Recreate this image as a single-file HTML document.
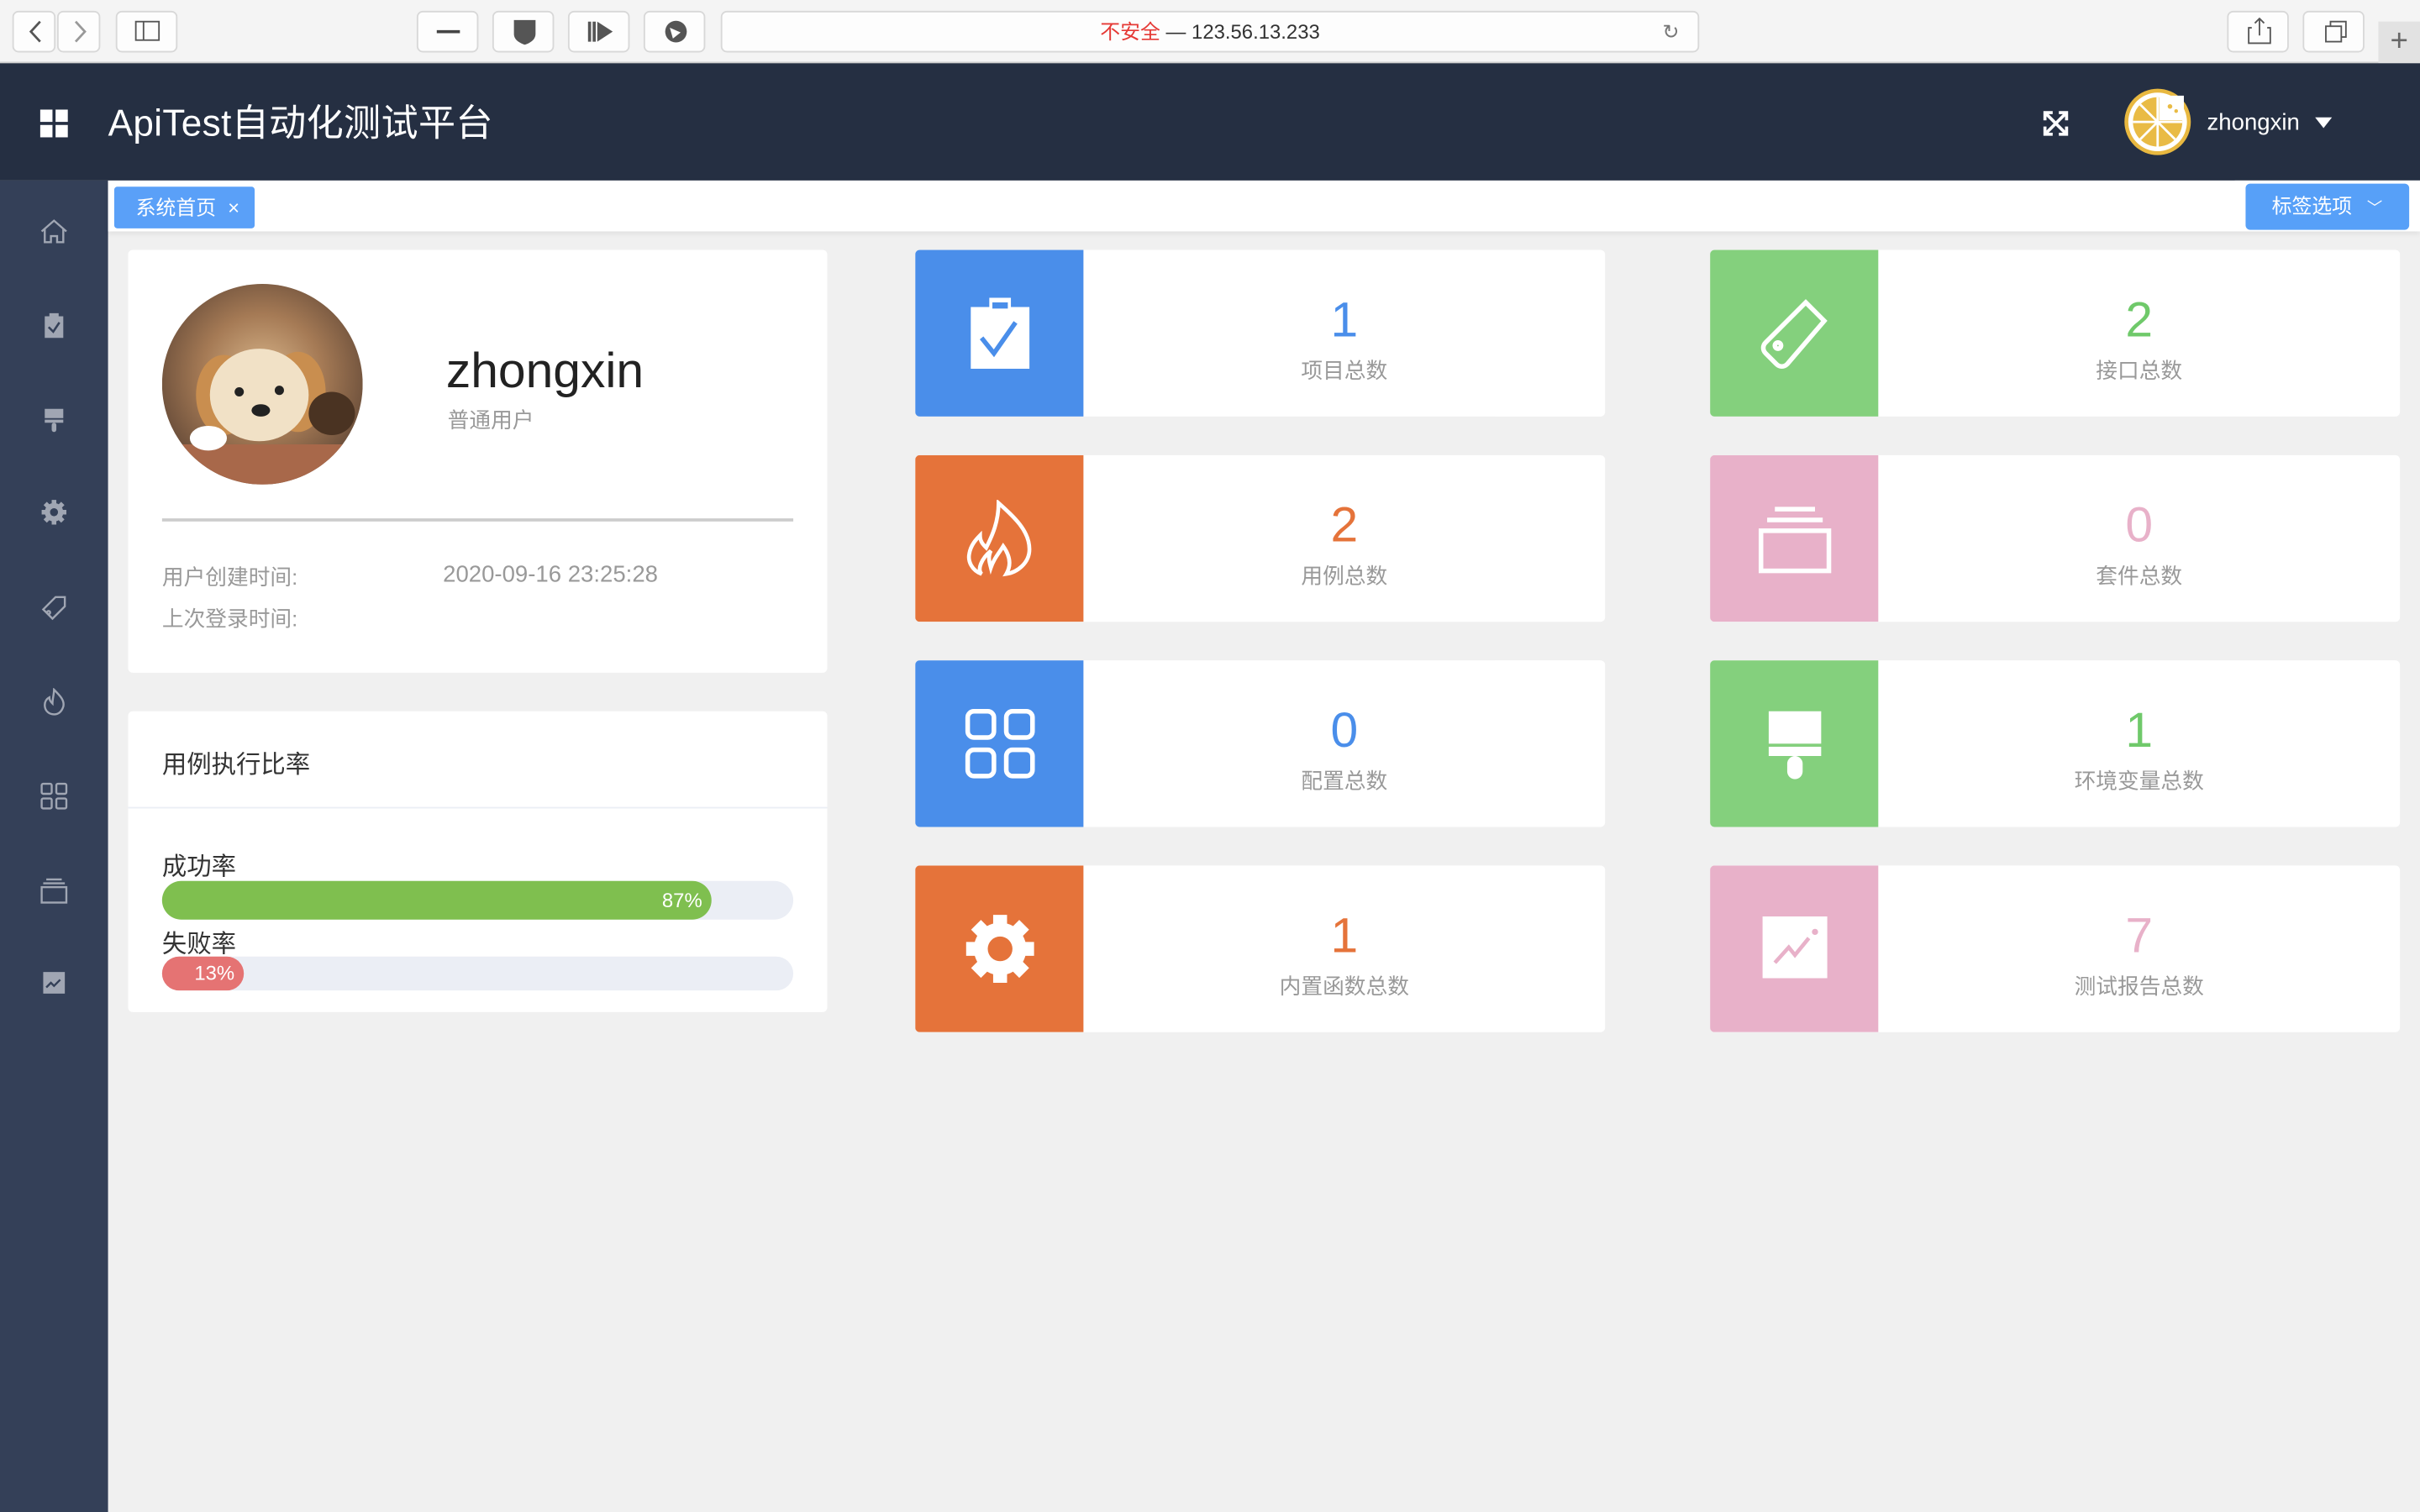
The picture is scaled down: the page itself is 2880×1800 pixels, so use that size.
<!DOCTYPE html>
<html><head><meta charset="utf-8"><style>
*{margin:0;padding:0;box-sizing:border-box}
html,body{width:2880px;height:1800px;overflow:hidden;background:#f0f0f0}
#s{position:absolute;left:0;top:0;width:1568px;height:980px;transform:scale(1.836735);transform-origin:0 0;font-family:"Liberation Sans","Noto Sans CJK SC",sans-serif;background:#f0f0f0}
.a{position:absolute}
.btn{position:absolute;top:7px;height:27px;background:#fdfdfd;border:1px solid #d8d8d8;border-radius:4px}
.card{position:absolute;background:#fff;border-radius:3px}
.stat{position:absolute;width:447px;height:108px;background:#fff;border-radius:3px;overflow:hidden}
.stat .ic{position:absolute;left:0;top:0;width:109px;height:108px;display:flex;align-items:center;justify-content:center}
.stat .n{position:absolute;left:109px;right:0;top:26px;text-align:center;font-size:32px;line-height:38px}
.stat .l{position:absolute;left:109px;right:0;top:68px;text-align:center;font-size:14px;color:#999}
.sb{position:absolute;left:26px;width:18px;height:18px}
</style></head><body><div id="s">
<!-- browser bar -->
<div class="a" style="left:0;top:0;width:1568px;height:41px;background:#f4f4f4;border-bottom:1px solid #cfcfcf"></div>
<div class="btn" style="left:8px;width:28px"><svg width="28" height="25"><path d="M17 6l-6 6.5 6 6.5" stroke="#555" stroke-width="1.5" fill="none"/></svg></div>
<div class="btn" style="left:37px;width:28px"><svg width="28" height="25"><path d="M11 6l6 6.5-6 6.5" stroke="#999" stroke-width="1.5" fill="none"/></svg></div>
<div class="btn" style="left:75px;width:40px"><svg width="40" height="25"><rect x="12" y="6" width="15" height="12" stroke="#555" fill="none"/><path d="M17 6v12" stroke="#555"/></svg></div>
<div class="btn" style="left:270px;width:40px"><svg width="40" height="25"><path d="M12 12.5h15" stroke="#444" stroke-width="2"/></svg></div>
<div class="btn" style="left:319px;width:40px"><svg width="40" height="25"><path d="M13 5h14v9c0 4-4 6-7 7-3-1-7-3-7-7z" fill="#555"/></svg></div>
<div class="btn" style="left:368px;width:40px"><svg width="40" height="25"><path d="M12 6h2v13h-2zM15 6h2v13h-2zM18 6l10 6.5-10 6.5z" fill="#555"/></svg></div>
<div class="btn" style="left:417px;width:40px"><svg width="40" height="25"><circle cx="20" cy="12.5" r="7" fill="#555"/><path d="M16 10l7 3-5 4z" fill="#fff"/></svg></div>
<div class="btn" style="left:467px;width:634px;text-align:center;font-size:13px;line-height:25px;color:#333"><span style="color:#e53935">不安全</span> — 123.56.13.233<span style="position:absolute;right:12px;color:#777">↻</span></div>
<div class="btn" style="left:1443px;width:40px"><svg width="40" height="25"><path d="M15 10h-2v10h14V10h-2M20 4v11M17 7l3-3 3 3" stroke="#555" fill="none"/></svg></div>
<div class="btn" style="left:1492px;width:40px"><svg width="40" height="25"><rect x="14" y="9" width="10" height="10" stroke="#555" fill="none"/><path d="M17 9V6h10v10h-3" stroke="#555" fill="none"/></svg></div>
<div class="a" style="left:1541px;top:14px;width:27px;height:27px;background:#e2e2e2;color:#666;font-size:20px;text-align:center;line-height:27px">+</div>
<!-- header -->
<div class="a" style="left:0;top:41px;width:1568px;height:76px;background:#252f42"></div>
<svg class="a" style="left:26px;top:71px" width="18" height="18"><rect x="0" y="0" width="8" height="8" fill="#fff"/><rect x="10" y="0" width="8" height="8" fill="#fff"/><rect x="0" y="10" width="8" height="8" fill="#fff"/><rect x="10" y="10" width="8" height="8" fill="#fff"/></svg>
<div class="a" style="left:70px;top:65px;font-size:24px;color:#fff;line-height:32px;letter-spacing:.2px">ApiTest自动化测试平台</div>
<svg class="a" style="left:1323px;top:71px" width="18" height="18" stroke="#fff" stroke-width="2" fill="none"><path d="M2 2l14 14M16 2L2 16M2 7V2h5M11 2h5v5M16 11v5h-5M7 16H2v-5"/></svg>
<svg class="a" style="left:1376px;top:57px" width="44" height="44"><circle cx="22" cy="22" r="21.5" fill="#e8b840"/><circle cx="22" cy="22" r="19" fill="#fff"/><circle cx="22" cy="22" r="16" fill="#e9bb45"/><path d="M22 6v32M6 22h32M10.7 10.7L33.3 33.3M10.7 33.3L22 22" stroke="#fff" stroke-width="1.5"/><path d="M23 5h16v16H23z" fill="#fff"/><circle cx="30" cy="12" r="1.5" fill="#e9bb45"/><circle cx="34" cy="15" r="1.2" fill="#e9bb45"/></svg>
<div class="a" style="left:1430px;top:71px;font-size:15px;color:#fff">zhongxin</div>
<svg class="a" style="left:1500px;top:76px" width="11" height="8"><path d="M0 0h11L5.5 7z" fill="#fff"/></svg>
<!-- sidebar -->
<div class="a" style="left:0;top:117px;width:70px;height:863px;background:#344058"></div>
<svg class="sb" style="top:141px" viewBox="0 0 18 18" fill="none" stroke="#a0a6b3" stroke-width="1.3"><path d="M1 9L9 2l8 7M3 7.5V16h4v-4h4v4h4V7.5"/></svg>
<svg class="sb" style="top:202px" viewBox="0 0 18 18"><rect x="3" y="3" width="12" height="14" fill="#a0a6b3"/><rect x="6" y="1" width="6" height="3" fill="#a0a6b3"/><path d="M5.5 10l3 3 4-6" stroke="#344058" stroke-width="1.4" fill="none"/></svg>
<svg class="sb" style="top:263px" viewBox="0 0 18 18" fill="#a0a6b3"><rect x="3" y="2" width="12" height="6"/><rect x="3" y="9" width="12" height="2"/><rect x="7.5" y="11" width="3" height="6" rx="1.5"/></svg>
<svg class="sb" style="top:323px" viewBox="0 0 18 18"><circle cx="9" cy="9" r="6" fill="#a0a6b3"/><path d="M9 1v16M1 9h16M3.3 3.3l11.4 11.4M14.7 3.3L3.3 14.7" stroke="#a0a6b3" stroke-width="3"/><circle cx="9" cy="9" r="2.6" fill="#344058"/></svg>
<svg class="sb" style="top:385px" viewBox="0 0 18 18" fill="none" stroke="#a0a6b3" stroke-width="1.3"><path d="M10 2h6v6l-8 8-6-6z"/><circle cx="5.5" cy="12" r="1"/></svg>
<svg class="sb" style="top:446px" viewBox="0 0 18 18" fill="none" stroke="#a0a6b3" stroke-width="1.3"><path d="M9 1c4 4 7 7 6 11-1 3-3 5-6 5s-6-2-6-6c0-2 1-4 3-5 0 2 1 3 2 4 0-3 1-6 1-9z"/></svg>
<svg class="sb" style="top:507px" viewBox="0 0 18 18" fill="none" stroke="#a0a6b3" stroke-width="1.3"><rect x="1" y="1" width="6.5" height="6.5" rx="1"/><rect x="10.5" y="1" width="6.5" height="6.5" rx="1"/><rect x="1" y="10.5" width="6.5" height="6.5" rx="1"/><rect x="10.5" y="10.5" width="6.5" height="6.5" rx="1"/></svg>
<svg class="sb" style="top:568px" viewBox="0 0 18 18" fill="none" stroke="#a0a6b3" stroke-width="1.3"><rect x="1" y="7" width="16" height="10"/><path d="M2 4.5h14M4 2h10"/></svg>
<svg class="sb" style="top:628px" viewBox="0 0 18 18"><rect x="2" y="2" width="14" height="14" fill="#a0a6b3"/><path d="M4 12l3-3 2 2 4-4" stroke="#344058" stroke-width="1.3" fill="none"/></svg>
<!-- tab bar -->
<div class="a" style="left:70px;top:117px;width:1498px;height:33px;background:#fff;box-shadow:0 2px 3px rgba(0,0,0,.06)"></div>
<div class="a" style="left:74px;top:121px;width:91px;height:27px;background:#5aa0f8;border-radius:2px;color:#fff;font-size:13px;line-height:27px;padding-left:14px">系统首页 <span style="margin-left:4px">×</span></div>
<div class="a" style="left:1448px;top:117px;width:120px;height:33px;background:#fff"></div>
<div class="a" style="left:1455px;top:119px;width:106px;height:30px;background:#57a0f8;border-radius:3px;color:#fff;font-size:13px;line-height:30px;padding-left:17px">标签选项 <span style="font-size:10px;margin-left:6px">﹀</span></div>
<!-- profile card -->
<div class="card" style="left:83px;top:162px;width:453px;height:274px"></div>
<svg class="a" style="left:105px;top:184px" width="130" height="130"><defs><radialGradient id="g" cx=".5" cy=".45" r=".6"><stop offset="0" stop-color="#d8b58a"/><stop offset=".5" stop-color="#a57a55"/><stop offset="1" stop-color="#5e4535"/></radialGradient><clipPath id="c"><circle cx="65" cy="65" r="65"/></clipPath></defs><g clip-path="url(#c)"><rect width="130" height="130" fill="url(#g)"/><ellipse cx="40" cy="72" rx="18" ry="26" fill="#c98e4f"/><ellipse cx="88" cy="70" rx="18" ry="26" fill="#c98e4f"/><ellipse cx="63" cy="72" rx="32" ry="30" fill="#f1e1c6"/><circle cx="50" cy="70" r="3" fill="#222"/><circle cx="76" cy="69" r="3" fill="#222"/><ellipse cx="64" cy="82" rx="6" ry="4" fill="#222"/><path d="M0 104h130v30H0z" fill="#a8684a"/><ellipse cx="110" cy="84" rx="15" ry="14" fill="#4a3322"/><ellipse cx="30" cy="100" rx="12" ry="8" fill="#fff"/></g></svg>
<div class="a" style="left:289px;top:220px;font-size:32px;color:#222;line-height:40px">zhongxin</div>
<div class="a" style="left:290px;top:262px;font-size:14px;color:#999">普通用户</div>
<div class="a" style="left:105px;top:336px;width:409px;height:2px;background:#ccc"></div>
<div class="a" style="left:105px;top:364px;font-size:14px;color:#999">用户创建时间:</div>
<div class="a" style="left:287px;top:364px;font-size:15px;color:#999">2020-09-16 23:25:28</div>
<div class="a" style="left:105px;top:391px;font-size:14px;color:#999">上次登录时间:</div>
<!-- rate card -->
<div class="card" style="left:83px;top:461px;width:453px;height:195px"></div>
<div class="a" style="left:105px;top:482px;font-size:16px;color:#333">用例执行比率</div>
<div class="a" style="left:83px;top:523px;width:453px;height:1px;background:#ebeef5"></div>
<div class="a" style="left:105px;top:548px;font-size:16px;color:#333">成功率</div>
<div class="a" style="left:105px;top:571px;width:409px;height:25px;background:#ebeef5;border-radius:13px"></div>
<div class="a" style="left:105px;top:571px;width:356px;height:25px;background:#7fbf4f;border-radius:13px;color:#fff;font-size:13px;line-height:25px;text-align:right;padding-right:6px">87%</div>
<div class="a" style="left:105px;top:598px;font-size:16px;color:#333">失败率</div>
<div class="a" style="left:105px;top:620px;width:409px;height:22px;background:#ebeef5;border-radius:11px"></div>
<div class="a" style="left:105px;top:620px;width:53px;height:22px;background:#e57373;border-radius:11px;color:#fff;font-size:13px;line-height:22px;text-align:right;padding-right:6px">13%</div>
<!-- stats -->
<div class="stat" style="left:593px;top:162px"><div class="ic" style="background:#4a8eea"><svg width="40" height="46"><rect x="1" y="6" width="38" height="40" fill="#fff"/><rect x="13" y="0" width="14" height="8" fill="#fff"/><rect x="15" y="3" width="10" height="4" fill="#4a8eea"/><path d="M8 26l8 10 14-20" stroke="#4a8eea" stroke-width="3" fill="none"/></svg></div><div class="n" style="color:#4a8eea">1</div><div class="l">项目总数</div></div>
<div class="stat" style="left:1108px;top:162px"><div class="ic" style="background:#84d07d"><svg width="46" height="46" fill="none" stroke="#fff" stroke-width="3"><path d="M30 3l12 12-24 28c-2 2-5 2-7 0l-7-7c-2-2-2-5 0-7z"/><circle cx="12" cy="31" r="2"/></svg></div><div class="n" style="color:#6fc96a">2</div><div class="l">接口总数</div></div>
<div class="stat" style="left:593px;top:295px"><div class="ic" style="background:#e5733a"><svg width="46" height="50" fill="none" stroke="#fff" stroke-width="2.5"><path d="M22 2c10 9 20 18 20 30 0 9-8 15-15 16 3-5 3-11-2-18-3 5-6 8-8 14-1-4-2-7 0-11-6 5-9 12-6 15-6-2-9-8-8-13 1-6 5-10 7-12 0 4 2 6 4 8 4-8 8-17 8-29z"/></svg></div><div class="n" style="color:#e5733a">2</div><div class="l">用例总数</div></div>
<div class="stat" style="left:1108px;top:295px"><div class="ic" style="background:#e8b1c9"><svg width="48" height="46" fill="none" stroke="#fff" stroke-width="3"><rect x="2" y="18" width="44" height="26"/><path d="M6 11h36M11 4h26"/></svg></div><div class="n" style="color:#e8b1c9">0</div><div class="l">套件总数</div></div>
<div class="stat" style="left:593px;top:428px"><div class="ic" style="background:#4a8eea"><svg width="46" height="46" fill="none" stroke="#fff" stroke-width="3"><rect x="2" y="2" width="17" height="17" rx="4"/><rect x="27" y="2" width="17" height="17" rx="4"/><rect x="2" y="27" width="17" height="17" rx="4"/><rect x="27" y="27" width="17" height="17" rx="4"/></svg></div><div class="n" style="color:#4a8eea">0</div><div class="l">配置总数</div></div>
<div class="stat" style="left:1108px;top:428px"><div class="ic" style="background:#84d07d"><svg width="36" height="46" fill="#fff"><rect x="1" y="2" width="34" height="21"/><rect x="1" y="25" width="34" height="6"/><rect x="13" y="31" width="10" height="15" rx="5"/></svg></div><div class="n" style="color:#6fc96a">1</div><div class="l">环境变量总数</div></div>
<div class="stat" style="left:593px;top:561px"><div class="ic" style="background:#e5733a"><svg width="48" height="48"><circle cx="24" cy="24" r="17" fill="#fff"/><path d="M24 2v44M2 24h44M8.4 8.4l31.2 31.2M39.6 8.4L8.4 39.6" stroke="#fff" stroke-width="9"/><circle cx="24" cy="24" r="8" fill="#e5733a"/></svg></div><div class="n" style="color:#e5733a">1</div><div class="l">内置函数总数</div></div>
<div class="stat" style="left:1108px;top:561px"><div class="ic" style="background:#e8b1c9"><svg width="42" height="42"><rect x="0" y="0" width="42" height="40" fill="#fff"/><path d="M8 30l9-10 4 5 9-11" stroke="#e8b1c9" stroke-width="2.5" fill="none"/><circle cx="34" cy="10" r="2" fill="#e8b1c9"/></svg></div><div class="n" style="color:#e8b1c9">7</div><div class="l">测试报告总数</div></div>
</div></body></html>
